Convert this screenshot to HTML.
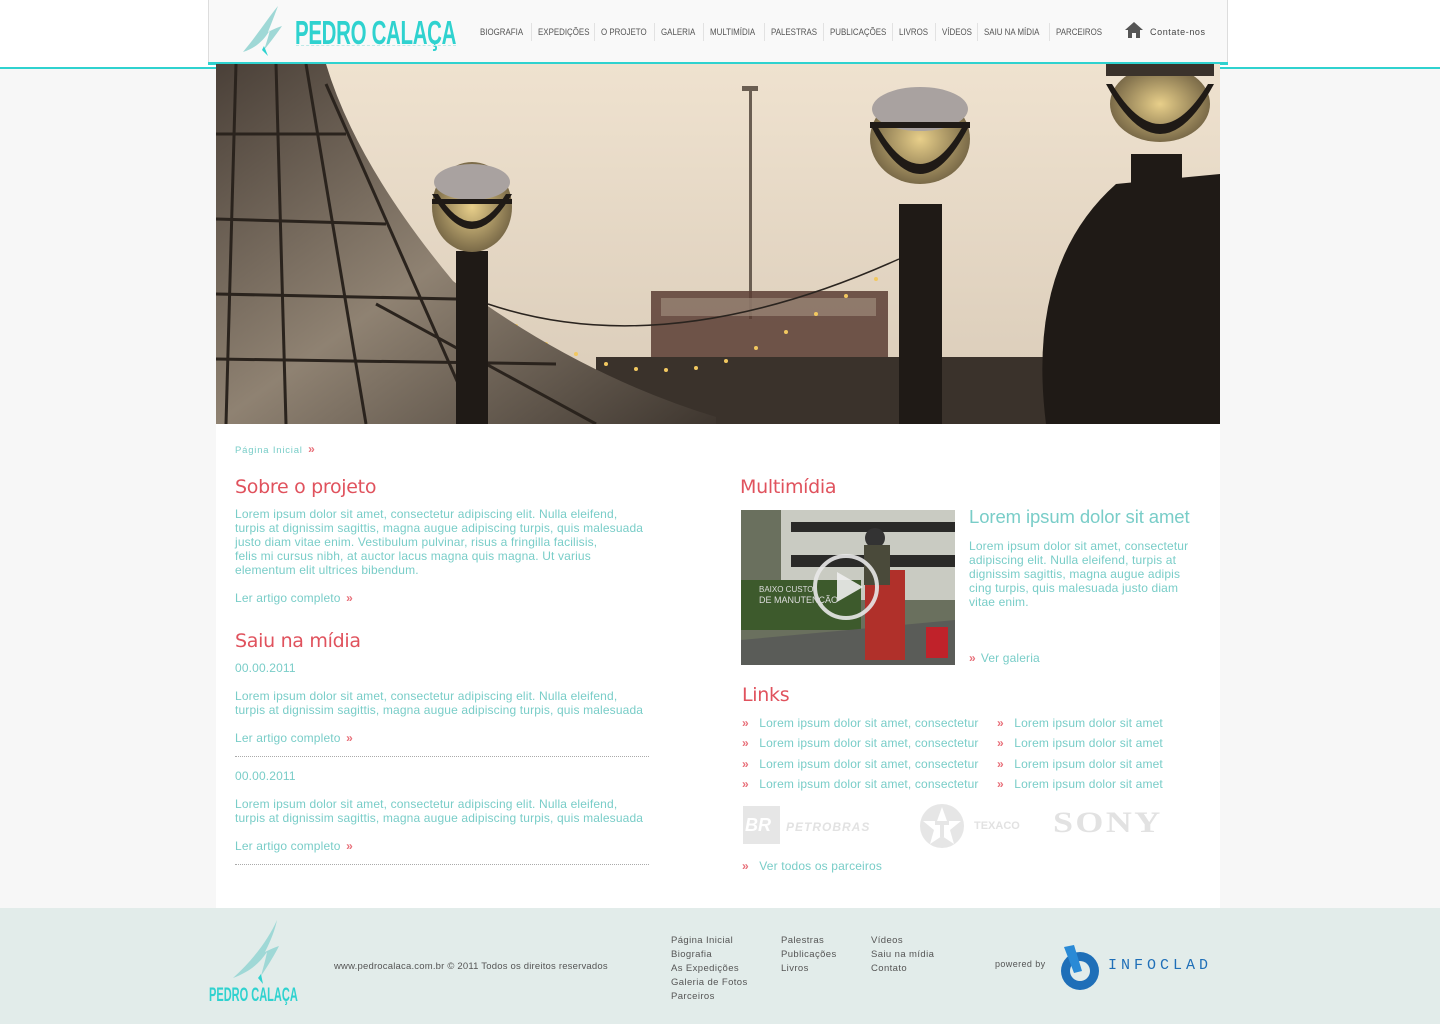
<!DOCTYPE html>
<html><head><meta charset="utf-8"><style>
*{margin:0;padding:0;box-sizing:border-box}
body{width:1440px;height:1024px;position:relative;background:#f7f7f7;font-family:"Liberation Sans",sans-serif;overflow:hidden}
.a{position:absolute;white-space:nowrap}
.nav{font-size:9px;color:#555;top:27px;transform:scaleX(.88);transform-origin:left}
.sep{position:absolute;top:23px;width:1px;height:18px;background:#e2e2e2}
.t{color:#79cdc8;font-size:12px;line-height:14px;letter-spacing:.15px}
.h{font-family:"DejaVu Sans",sans-serif;color:#e0525d;font-size:19px;letter-spacing:-.3px}
.r{color:#e8707a;font-size:12px;font-weight:bold}
.dot{position:absolute;left:235px;width:414px;border-top:1px dotted #aaa}
.f{font-size:9.5px;color:#555;letter-spacing:.4px;line-height:14px}
</style></head><body>
<!-- header -->
<div class="a" style="left:0;top:0;width:1440px;height:68px;background:#fff"></div>
<div class="a" style="left:0;top:67px;width:1440px;height:2px;background:#2fd2cf"></div>
<div class="a" style="left:208px;top:0;width:1020px;height:64px;background:#f9f9f9;border:1px solid #ddd;border-top:none"></div>
<div class="a" style="left:208px;top:62px;width:1020px;height:3px;background:#2fd2cf"></div>
<svg class="a" style="left:240px;top:4px" width="48" height="54" viewBox="0 0 48 54"><path d="M38 2 C28 14 18 30 3 48 C16 44 24 36 30 26 C28 34 26 40 24 46 C32 36 38 28 42 22 C36 24 32 26 28 28 C32 18 35 10 38 2Z" fill="#9fd8d6"/><path d="M24 42 L28 52 L22 46Z" fill="#2fd2cf"/></svg>
<div class="a" style="left:295px;top:14px;font-size:33px;font-weight:bold;color:#2fd2cf;transform:scaleX(.62);transform-origin:left;letter-spacing:-.5px">PEDRO CALAÇA</div>
<div class="a" style="left:296px;top:45px;width:160px;border-top:1px dashed #bde9e7"></div>
<div class="a nav" style="left:480px">BIOGRAFIA</div><div class="sep" style="left:531px"></div>
<div class="a nav" style="left:538px">EXPEDIÇÕES</div><div class="sep" style="left:594px"></div>
<div class="a nav" style="left:601px">O PROJETO</div><div class="sep" style="left:654px"></div>
<div class="a nav" style="left:661px">GALERIA</div><div class="sep" style="left:703px"></div>
<div class="a nav" style="left:710px">MULTIMÍDIA</div><div class="sep" style="left:764px"></div>
<div class="a nav" style="left:771px">PALESTRAS</div><div class="sep" style="left:823px"></div>
<div class="a nav" style="left:830px">PUBLICAÇÕES</div><div class="sep" style="left:892px"></div>
<div class="a nav" style="left:899px">LIVROS</div><div class="sep" style="left:935px"></div>
<div class="a nav" style="left:942px">VÍDEOS</div><div class="sep" style="left:977px"></div>
<div class="a nav" style="left:984px">SAIU NA MÍDIA</div><div class="sep" style="left:1049px"></div>
<div class="a nav" style="left:1056px">PARCEIROS</div>
<svg class="a" style="left:1124px;top:21px" width="20" height="18" viewBox="0 0 20 18"><path d="M10 1 L19 9 L16 9 L16 17 L12 17 L12 12 L8 12 L8 17 L4 17 L4 9 L1 9Z" fill="#555"/></svg>
<div class="a" style="left:1150px;top:27px;font-size:9px;color:#444;letter-spacing:.6px">Contate-nos</div>
<!-- content white -->
<div class="a" style="left:216px;top:64px;width:1004px;height:844px;background:#fff"></div>
<!-- hero -->
<svg class="a" style="left:216px;top:64px" width="1004" height="360" viewBox="0 0 1004 360">
<defs><linearGradient id="sky" x1="0" y1="0" x2="0" y2="1"><stop offset="0" stop-color="#efe2cf"/><stop offset="1" stop-color="#d9cbb8"/></linearGradient>
<linearGradient id="tent" x1="0" y1="0" x2="1" y2="1"><stop offset="0" stop-color="#4a4038"/><stop offset=".5" stop-color="#8f8272"/><stop offset="1" stop-color="#3e362f"/></linearGradient>
<radialGradient id="glow"><stop offset="0" stop-color="#e8cf8a"/><stop offset="1" stop-color="#7a6a48"/></radialGradient></defs>
<rect width="1004" height="360" fill="url(#sky)"/>
<rect x="533" y="25" width="3" height="230" fill="#6a5e52"/><rect x="526" y="22" width="16" height="5" fill="#6a5e52"/>
<rect x="435" y="227" width="237" height="66" fill="#5b3d34" opacity=".85"/>
<rect x="445" y="234" width="215" height="18" fill="#9c8a7a" opacity=".7"/>
<rect x="380" y="293" width="450" height="67" fill="#3a322b"/>
<path d="M272 240 Q450 300 683 195" stroke="#2a241f" stroke-width="1.5" fill="none"/>
<g fill="#f2c860"><circle cx="300" cy="262" r="2"/><circle cx="330" cy="280" r="2"/><circle cx="360" cy="290" r="2"/><circle cx="390" cy="300" r="2"/><circle cx="420" cy="305" r="2"/><circle cx="450" cy="306" r="2"/><circle cx="480" cy="304" r="2"/><circle cx="510" cy="297" r="2"/><circle cx="540" cy="284" r="2"/><circle cx="570" cy="268" r="2"/><circle cx="600" cy="250" r="2"/><circle cx="630" cy="232" r="2"/><circle cx="660" cy="215" r="2"/></g>
<path d="M0 0 L110 0 Q140 100 237 217 Q360 310 500 353 L500 360 L0 360Z" fill="url(#tent)"/>
<g stroke="#2a231d" stroke-width="3" fill="none"><path d="M20 0 L10 360"/><path d="M60 0 L70 360"/><path d="M90 0 L150 360"/><path d="M110 20 L260 360"/><path d="M0 70 L130 70"/><path d="M0 155 L170 160"/><path d="M0 230 L240 235"/><path d="M0 295 L340 300"/><path d="M160 240 L380 360"/></g>
<g fill="#1f1a16">
<rect x="240" y="187" width="32" height="173"/><ellipse cx="256" cy="143" rx="40" ry="45" fill="url(#glow)"/><path d="M216 130 Q256 200 296 130 L290 130 Q256 185 222 130Z"/><ellipse cx="256" cy="118" rx="38" ry="18" fill="#a9a2a0"/><rect x="216" y="135" width="80" height="5"/>
<rect x="683" y="140" width="43" height="220"/><ellipse cx="704" cy="75" rx="50" ry="45" fill="url(#glow)"/><path d="M654 60 Q704 160 754 60 L748 60 Q704 140 660 60Z"/><ellipse cx="704" cy="45" rx="48" ry="22" fill="#a9a2a0"/><rect x="654" y="58" width="100" height="6"/>
<path d="M830 360 Q810 200 900 120 L1004 110 L1004 360Z"/>
<rect x="915" y="90" width="51" height="270"/><ellipse cx="944" cy="40" rx="50" ry="38" fill="url(#glow)"/><path d="M890 20 Q944 120 998 20 L992 20 Q944 100 896 20Z"/><rect x="890" y="0" width="108" height="12" fill="#3a322b"/>
</g></svg>
<!-- left column -->
<div class="a" style="left:235px;top:442px;font-size:9.5px;color:#79cdc8;letter-spacing:.8px">Página Inicial <span class="r" style="margin-left:2px;letter-spacing:0">»</span></div>
<div class="a h" style="left:235px;top:476px">Sobre o projeto</div>
<div class="a t" style="left:235px;top:507px">Lorem ipsum dolor sit amet, consectetur adipiscing elit. Nulla eleifend,<br>turpis at dignissim sagittis, magna augue adipiscing turpis, quis malesuada<br>justo diam vitae enim. Vestibulum pulvinar, risus a fringilla facilisis,<br>felis mi cursus nibh, at auctor lacus magna quis magna. Ut varius<br>elementum elit ultrices bibendum.</div>
<div class="a t" style="left:235px;top:591px">Ler artigo completo <span class="r" style="margin-left:2px">»</span></div>
<div class="a h" style="left:235px;top:630px">Saiu na mídia</div>
<div class="a t" style="left:235px;top:661px">00.00.2011</div>
<div class="a t" style="left:235px;top:689px">Lorem ipsum dolor sit amet, consectetur adipiscing elit. Nulla eleifend,<br>turpis at dignissim sagittis, magna augue adipiscing turpis, quis malesuada</div>
<div class="a t" style="left:235px;top:731px">Ler artigo completo <span class="r" style="margin-left:2px">»</span></div>
<div class="dot" style="top:756px"></div>
<div class="a t" style="left:235px;top:769px">00.00.2011</div>
<div class="a t" style="left:235px;top:797px">Lorem ipsum dolor sit amet, consectetur adipiscing elit. Nulla eleifend,<br>turpis at dignissim sagittis, magna augue adipiscing turpis, quis malesuada</div>
<div class="a t" style="left:235px;top:839px">Ler artigo completo <span class="r" style="margin-left:2px">»</span></div>
<div class="dot" style="top:864px"></div>
<!-- right column -->
<div class="a h" style="left:740px;top:476px">Multimídia</div>
<svg class="a" style="left:741px;top:510px" width="214" height="155" viewBox="0 0 214 155">
<rect width="214" height="155" fill="#6a705e"/><rect x="40" y="0" width="174" height="90" fill="#c9cbc2"/><rect x="50" y="12" width="164" height="10" fill="#2a2a28"/><rect x="50" y="45" width="164" height="12" fill="#2a2a28"/><rect x="0" y="70" width="120" height="50" fill="#3d5a2c"/><path d="M0 130 L214 110 L214 155 L0 155Z" fill="#5a5c58"/><rect x="124" y="60" width="40" height="90" fill="#b0302a"/><circle cx="134" cy="28" r="10" fill="#333"/><rect x="123" y="35" width="26" height="40" fill="#4a4a3a"/><circle cx="105" cy="77" r="31" fill="none" stroke="#e8e8e8" stroke-width="4" opacity=".9"/><path d="M96 62 L122 77 L96 92Z" fill="#eee" opacity=".9"/><rect x="185" y="117" width="22" height="31" fill="#c0222a"/><text x="18" y="82" font-size="8" fill="#ddd" font-family="Liberation Sans">BAIXO CUSTO</text><text x="18" y="93" font-size="9" fill="#ddd" font-family="Liberation Sans">DE MANUTENÇÃO</text></svg>
<div class="a" style="left:969px;top:506px;font-size:18.5px;color:#79cdc8;letter-spacing:-.1px">Lorem ipsum dolor sit amet</div>
<div class="a t" style="left:969px;top:539px">Lorem ipsum dolor sit amet, consectetur<br>adipiscing elit. Nulla eleifend, turpis at<br>dignissim sagittis, magna augue adipis<br>cing turpis, quis malesuada justo diam<br>vitae enim.</div>
<div class="a t" style="left:969px;top:651px"><span class="r" style="margin-right:5px">»</span>Ver galeria</div>
<div class="a h" style="left:742px;top:684px">Links</div>
<div class="a t" style="left:742px;top:713px;line-height:20.4px"><span class="r">»</span>&nbsp;&nbsp;&nbsp;Lorem ipsum dolor sit amet, consectetur<br><span class="r">»</span>&nbsp;&nbsp;&nbsp;Lorem ipsum dolor sit amet, consectetur<br><span class="r">»</span>&nbsp;&nbsp;&nbsp;Lorem ipsum dolor sit amet, consectetur<br><span class="r">»</span>&nbsp;&nbsp;&nbsp;Lorem ipsum dolor sit amet, consectetur</div>
<div class="a t" style="left:997px;top:713px;line-height:20.4px"><span class="r">»</span>&nbsp;&nbsp;&nbsp;Lorem ipsum dolor sit amet<br><span class="r">»</span>&nbsp;&nbsp;&nbsp;Lorem ipsum dolor sit amet<br><span class="r">»</span>&nbsp;&nbsp;&nbsp;Lorem ipsum dolor sit amet<br><span class="r">»</span>&nbsp;&nbsp;&nbsp;Lorem ipsum dolor sit amet</div>
<div class="a" style="left:743px;top:806px;width:37px;height:38px;background:#e6e6e6"></div>
<div class="a" style="left:745px;top:815px;font-size:18px;font-weight:bold;font-style:italic;color:#fff">BR</div>
<div class="a" style="left:786px;top:820px;font-size:12px;font-weight:bold;font-style:italic;color:#e2e2e2;letter-spacing:1px">PETROBRAS</div>
<svg class="a" style="left:919px;top:803px" width="46" height="46" viewBox="0 0 46 46"><circle cx="23" cy="23" r="22" fill="#e6e6e6"/><path d="M23 4 L28 18 L42 18 L31 27 L35 41 L23 33 L11 41 L15 27 L4 18 L18 18Z" fill="#fff"/><path d="M16 18 L30 18 L30 22 L25 22 L25 34 L21 34 L21 22 L16 22Z" fill="#e6e6e6"/></svg>
<div class="a" style="left:974px;top:820px;font-size:11px;font-weight:bold;color:#e2e2e2">TEXACO</div>
<div class="a" style="left:1053px;top:806px;font-size:30px;font-weight:bold;font-family:'Liberation Serif',serif;color:#e2e2e2;letter-spacing:2px;transform:scaleX(1.2);transform-origin:left">SONY</div>
<div class="a t" style="left:742px;top:859px"><span class="r">»</span>&nbsp;&nbsp;&nbsp;Ver todos os parceiros</div>
<!-- footer -->
<div class="a" style="left:0;top:908px;width:1440px;height:116px;background:#e2ecea"></div>
<svg class="a" style="left:225px;top:918px" width="60" height="70" viewBox="0 0 60 70"><path d="M52 2 C44 20 30 40 8 60 C24 54 34 46 42 34 C40 44 38 50 36 58 C44 46 50 36 54 28 C48 30 44 32 40 34 C46 22 50 12 52 2Z" fill="#9fd8d6"/><path d="M36 56 L38 66 L33 60Z" fill="#2fd2cf"/></svg>
<div class="a" style="left:209px;top:985px;font-size:19px;font-weight:bold;color:#2fd2cf;transform:scaleX(.58);transform-origin:left">PEDRO CALAÇA</div>
<div class="a" style="left:334px;top:961px;font-size:9.5px;color:#555;letter-spacing:.2px">www.pedrocalaca.com.br © 2011 Todos os direitos reservados</div>
<div class="a f" style="left:671px;top:934px">Página Inicial<br>Biografia<br>As Expedições<br>Galeria de Fotos<br>Parceiros</div>
<div class="a f" style="left:781px;top:934px">Palestras<br>Publicações<br>Livros</div>
<div class="a f" style="left:871px;top:934px">Vídeos<br>Saiu na mídia<br>Contato</div>
<div class="a" style="left:995px;top:959px;font-size:9px;color:#555;letter-spacing:.4px">powered by</div>
<svg class="a" style="left:1058px;top:943px" width="44" height="48" viewBox="0 0 44 48"><circle cx="22" cy="28" r="19" fill="#1f6fb8"/><circle cx="22" cy="28" r="10" fill="#e2ecea"/><path d="M6 4 L16 2 L24 28 L16 30Z" fill="#2a8ad6"/></svg>
<div class="a" style="left:1108px;top:957px;font-size:15px;color:#1f6fb8;letter-spacing:4px;font-family:'Liberation Mono',monospace">INFOCLAD</div>
</body></html>
